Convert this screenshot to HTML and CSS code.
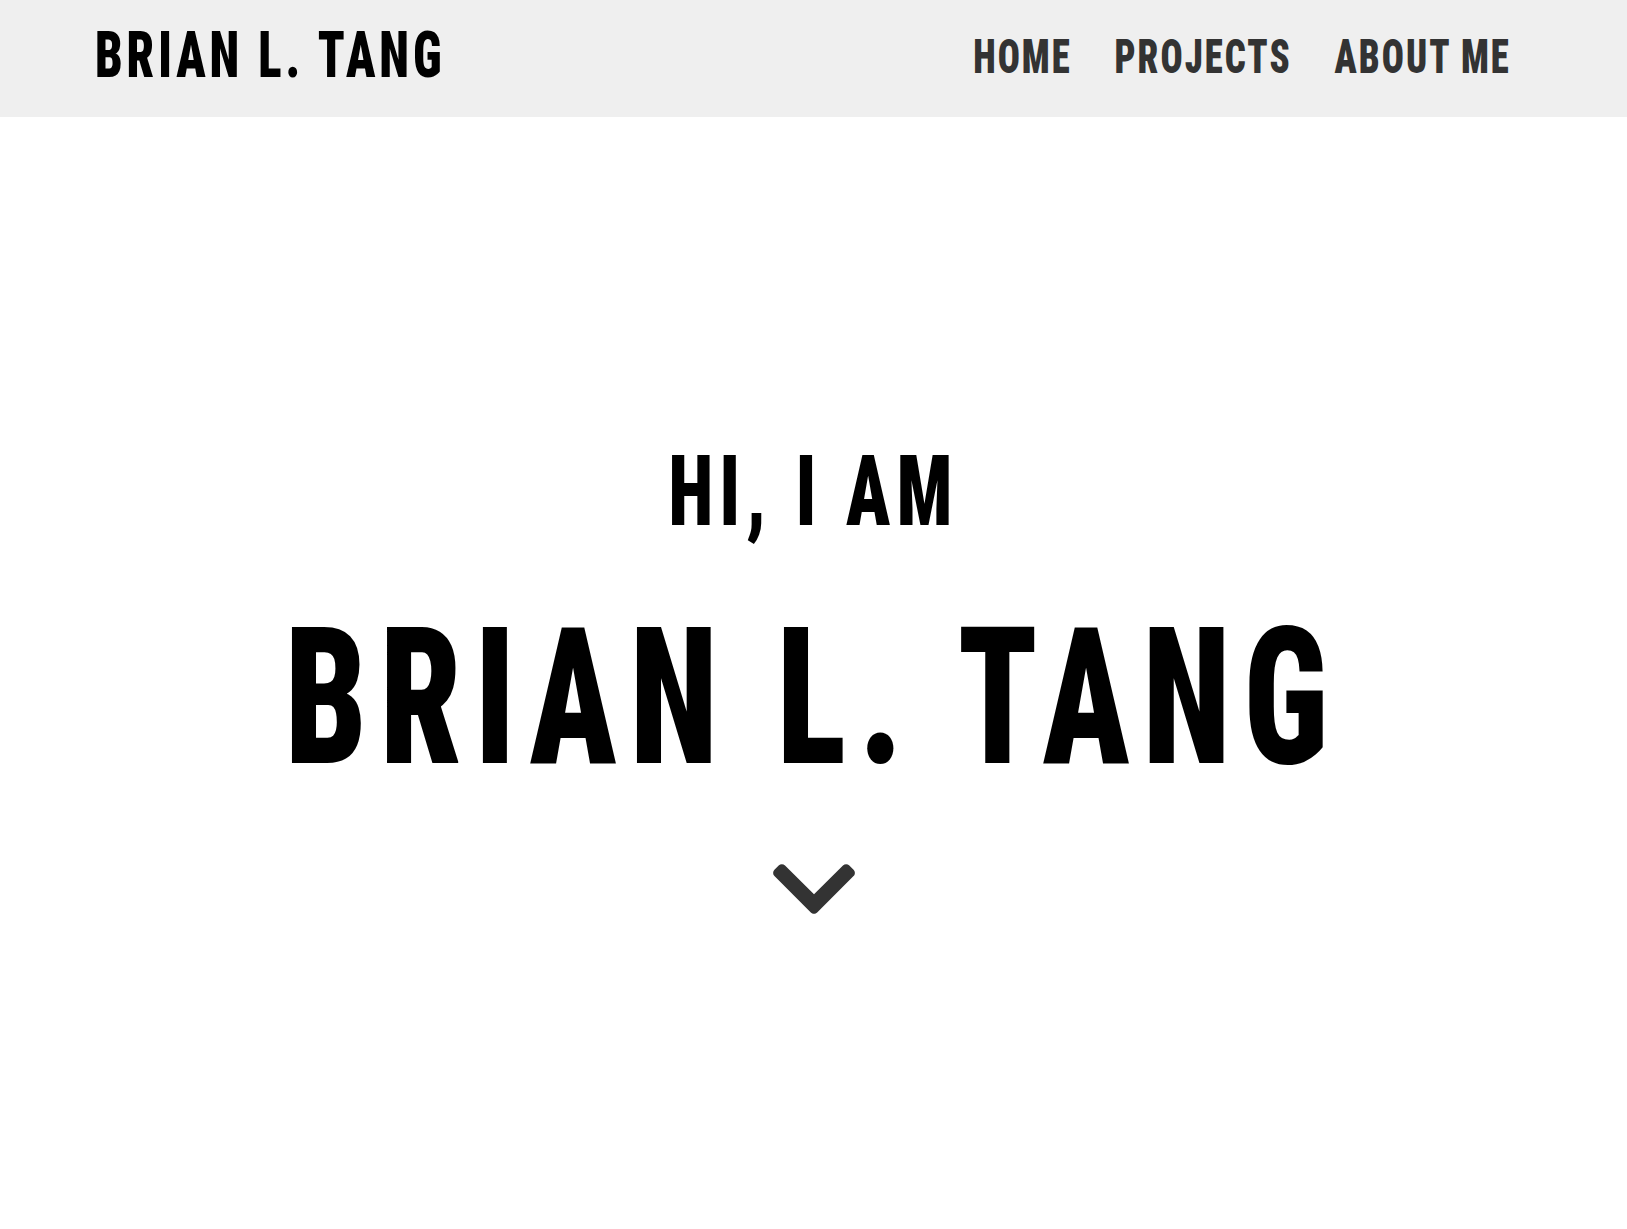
FILE: index.html
```html
<!DOCTYPE html>
<html lang="en">
<head>
<meta charset="utf-8">
<title>Brian L. Tang</title>
<link rel="stylesheet" href="styles.css">
</head>
<body>
<header class="site-header">
  <a class="brand" href="#">BRIAN L. TANG</a>
  <nav class="main-nav">
    <a class="nav-link" href="#">HOME</a>
    <a class="nav-link" href="#">PROJECTS</a>
    <a class="nav-link" href="#">ABOUT ME</a>
  </nav>
</header>
<main class="hero">
  <h2 class="hero-intro"><span class="squeeze">HI, I AM</span></h2>
  <h1 class="hero-name"><span class="squeeze">BRIAN L. TANG</span></h1>
  <a class="hero-scroll" href="#" aria-label="Scroll down">
    <svg class="chevron" viewBox="5 123 438 266" width="82" height="50" aria-hidden="true">
      <path d="M207.029 381.476L12.686 187.132c-9.373-9.373-9.373-24.569 0-33.941l22.667-22.667c9.357-9.357 24.522-9.375 33.901-.04L224 284.505l154.745-154.021c9.379-9.335 24.544-9.317 33.901.04l22.667 22.667c9.373 9.373 9.373 24.569 0 33.941L240.971 381.476c-9.373 9.372-24.569 9.372-33.942 0z"/>
    </svg>
  </a>
</main>
</body>
</html>
```

FILE: styles.css
```css
html, body {
  margin: 0;
  padding: 0;
  background: #ffffff;
}

body {
  font-family: "Roboto", "Open Sans", "Liberation Sans", sans-serif;
  font-weight: 900;
  font-stretch: 75%;
}

a {
  text-decoration: none;
}

.site-header {
  display: flex;
  justify-content: space-between;
  align-items: flex-start;
  height: 117px;
  box-sizing: border-box;
  padding: 0 116px 0 95px;
  background: #efefef;
}

.brand {
  display: block;
  margin-top: 22.5px;
  font-size: 65px;
  line-height: 1;
  letter-spacing: 5.2px;
  color: #000000;
  white-space: nowrap;
  transform: scaleX(0.75);
  transform-origin: left center;
}

.main-nav {
  display: flex;
  gap: 57px;
  margin-top: 32px;
  font-size: 49px;
  line-height: 1;
  letter-spacing: 2.7px;
  white-space: nowrap;
  transform: scaleX(0.75);
  transform-origin: right center;
}

.nav-link {
  color: #333333;
}

.hero {
  display: flex;
  flex-direction: column;
  align-items: center;
  padding-top: 326.5px;
  text-align: center;
}

.hero-intro,
.hero-name {
  margin: 0;
  line-height: 1;
  font-weight: 900;
  color: #000000;
  white-space: nowrap;
}

.squeeze {
  display: inline-block;
  transform: scaleX(0.75);
  transform-origin: center center;
}

.hero-intro {
  font-size: 97.5px;
  letter-spacing: 8.6px;
}

.hero-name {
  margin-top: 60.5px;
  font-size: 192px;
  letter-spacing: 17.5px;
}

.hero-scroll {
  display: block;
  margin-top: 70.5px;
  line-height: 0;
}

.chevron {
  display: block;
  fill: #333333;
}
```
